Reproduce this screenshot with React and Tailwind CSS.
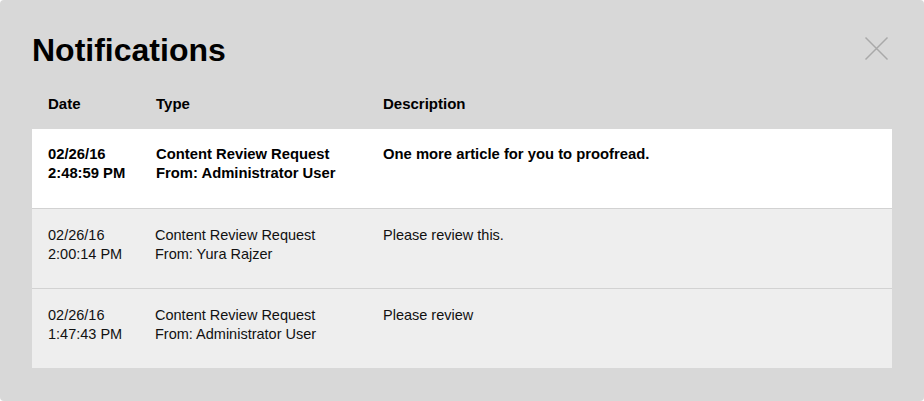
export default function App() {
  const rows = [
    { date: "02/26/16", time: "2:48:59 PM", type: "Content Review Request", from: "From: Administrator User", desc: "One more article for you to proofread.", unread: true },
    { date: "02/26/16", time: "2:00:14 PM", type: "Content Review Request", from: "From: Yura Rajzer", desc: "Please review this.", unread: false },
    { date: "02/26/16", time: "1:47:43 PM", type: "Content Review Request", from: "From: Administrator User", desc: "Please review", unread: false },
  ];
  return (
    <div className="w-[924px] h-[401px] bg-white" style={{ fontFamily: '"Liberation Sans", Arial, sans-serif' }}>
      <div className="w-full h-full bg-[#d8d8d8] rounded-[4px] px-8 pt-8 relative">
        <button className="absolute left-[864px] top-[36px] w-[25px] h-[25px] flex items-center justify-center">
          <svg width="25" height="25" viewBox="0 0 25 25">
            <path d="M1.5 1.5 L23.5 23.5 M23.5 1.5 L1.5 23.5" stroke="#a9a9a9" strokeWidth="1.5" fill="none" />
          </svg>
        </button>
        <h1 className="text-[32px] leading-[37px] font-bold text-black m-0">Notifications</h1>
        <div className="grid grid-cols-[108px_227px_1fr] pl-4 mt-[25px] mb-[15px] text-[15px] leading-[20px] font-bold text-black">
          <div>Date</div>
          <div>Type</div>
          <div>Description</div>
        </div>
        <div className="flex flex-col">
          {rows.map((r, i) => (
            <div
              key={i}
              className={`grid grid-cols-[108px_227px_1fr] pl-4 leading-[19px] ${r.unread ? "pt-4 bg-white font-bold text-black text-[14.8px]" : "pt-[17px] bg-[#eeeeee] text-[#111] text-[14.5px]"} ${i < rows.length - 1 ? "border-b border-[#d2d2d2] h-[80px]" : "h-[79px]"}`}
            >
              <div>
                <div>{r.date}</div>
                <div>{r.time}</div>
              </div>
              <div className={r.unread ? "" : "-ml-px"}>
                <div>{r.type}</div>
                <div>{r.from}</div>
              </div>
              <div>{r.desc}</div>
            </div>
          ))}
        </div>
      </div>
    </div>
  );
}
